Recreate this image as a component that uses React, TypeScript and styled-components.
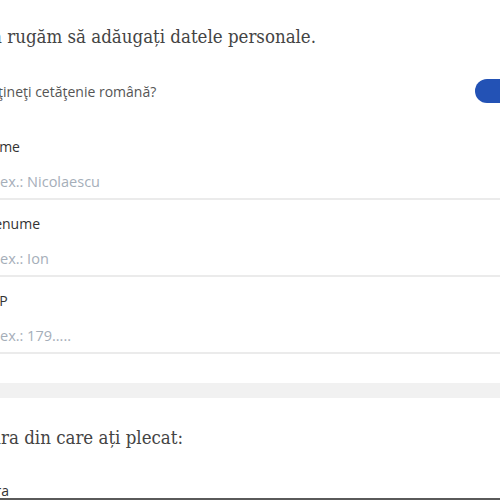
import React from "react";
import styled, { createGlobalStyle } from "styled-components";

const Global = createGlobalStyle`
  html, body { margin: 0; padding: 0; background: #fff; overflow: hidden; }
  body { font-family: "Open Sans", "Liberation Sans", sans-serif; }
`;

const Page = styled.div`
  width: 540px;
  margin-left: -20px;
  display: flex;
  flex-direction: column;
`;

const Section = styled.section<{ $top: number }>`
  display: flex;
  flex-direction: column;
  padding-top: ${(p) => p.$top}px;
`;

const Heading = styled.h2`
  margin: 0;
  font-family: "DejaVu Serif Condensed", "DejaVu Serif", serif;
  font-stretch: condensed;
  font-weight: 400;
  font-size: 18.5px;
  line-height: 30px;
  color: #444;
`;

const ToggleRow = styled.div`
  display: flex;
  align-items: center;
  justify-content: space-between;
  margin-top: 27px;
  margin-bottom: 20px;
  height: 24px;
`;

const Question = styled.span`
  font-size: 14px;
  color: #555;
`;

const Toggle = styled.div<{ $on: boolean }>`
  width: 46px;
  height: 24px;
  margin-right: -1px;
  border-radius: 12px;
  background: ${(p) => (p.$on ? "#2352b5" : "#ccc")};
  display: flex;
  align-items: center;
  justify-content: ${(p) => (p.$on ? "flex-end" : "flex-start")};
  padding: 0 3px;
  box-sizing: border-box;
`;

const Knob = styled.div`
  width: 18px;
  height: 18px;
  border-radius: 50%;
  background: #fff;
`;

const Field = styled.div`
  display: flex;
  flex-direction: column;
  border-bottom: 2px solid #ebebeb;
  padding-top: 14px;
  padding-bottom: 4px;
`;

const Label = styled.label`
  font-size: 14px;
  line-height: 20px;
  color: #333;
`;

const Input = styled.input`
  border: none;
  outline: none;
  padding: 0 0 0 20px;
  margin-top: 13px;
  font-family: inherit;
  font-size: 14.5px;
  line-height: 24px;
  height: 24px;
  background: transparent;
  &::placeholder { color: #a5aeb9; }
`;

const Band = styled.div`
  height: 15px;
  background: #f1f1f1;
  margin-top: 29px;
  margin-left: -20px;
  margin-right: -20px;
`;

const SubLabel = styled.label`
  font-size: 14px;
  line-height: 14px;
  color: #333;
  margin-top: 31px;
`;

const Select = styled.div`
  border-top: 2px solid #5a5a5a;
  height: 40px;
`;

export default function App() {
  return (
    <>
      <Global />
      <Page>
        <Section $top={22}>
          <Heading>Vă rugăm să adăugați datele personale.</Heading>
          <ToggleRow>
            <Question>Deţineţi cetăţenie română?</Question>
            <Toggle $on>
              <Knob />
            </Toggle>
          </ToggleRow>
          <Field>
            <Label>Nume</Label>
            <Input placeholder="ex.: Nicolaescu" />
          </Field>
          <Field>
            <Label>Prenume</Label>
            <Input placeholder="ex.: Ion" />
          </Field>
          <Field>
            <Label>CNP</Label>
            <Input placeholder="ex.: 179....." />
          </Field>
        </Section>
        <Band />
        <Section $top={25}>
          <Heading>Țara din care ați plecat:</Heading>
          <SubLabel>Țara</SubLabel>
          <Select />
        </Section>
      </Page>
    </>
  );
}
